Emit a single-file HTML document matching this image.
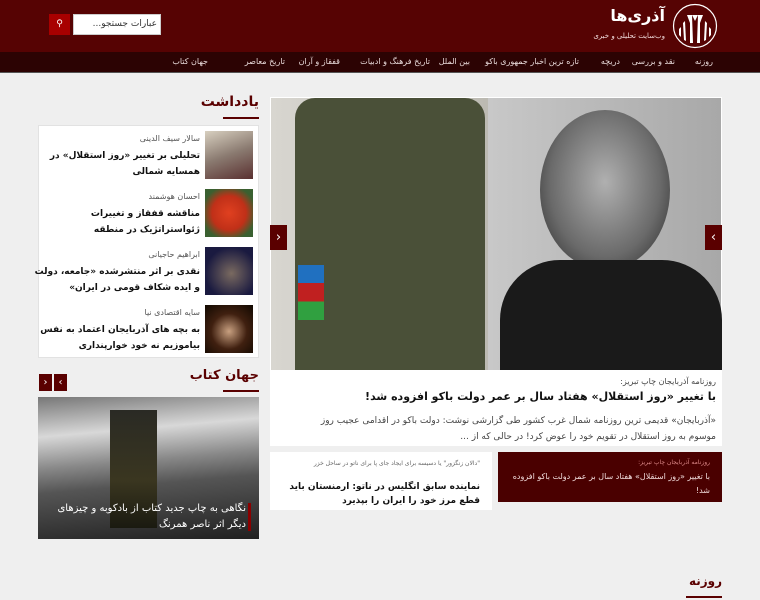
<!DOCTYPE html>
<html lang="fa" dir="rtl"><head><meta charset="utf-8">
<style>
*{margin:0;padding:0;box-sizing:border-box}
body{width:760px;height:600px;overflow:hidden;background:#efefef;font-family:"DejaVu Sans","Liberation Sans",sans-serif;color:#222;position:relative}
.abs{position:absolute}
#hdr{left:0;top:0;width:760px;height:52px;background:#560303}
#nav{left:0;top:52px;width:760px;height:21px;background:#2c0303;border-bottom:1px solid #555}
#nav span{position:absolute;top:5px;font-size:8px;color:#e8dada;white-space:nowrap}
.t{font-weight:bold}
</style></head><body>
<div id="hdr" class="abs">
 <svg class="abs" style="left:672px;top:3px" width="46" height="46" viewBox="0 0 46 46">
  <circle cx="23" cy="23" r="21.5" fill="none" stroke="#fff" stroke-width="1.2"/>
  <g fill="#fff">
   <path d="M15 12 L20 12 L21 40 L18 40 L18 20 Z"/><path d="M31 12 L26 12 L25 40 L28 40 L28 20 Z"/>
   <path d="M20 12 L26 12 L23 18 Z"/>
   <path d="M11 20 L13 18 L14 38 L12 37Z"/><path d="M35 20 L33 18 L32 38 L34 37Z"/>
   <path d="M7 26 L9 24 L9 34 L7 32Z"/><path d="M39 26 L37 24 L37 34 L39 32Z"/>
  </g>
 </svg>
 <div class="abs" style="right:95px;top:6px;font-size:16px;color:#fff;font-weight:bold">آذری‌ها</div>
 <div class="abs" style="right:95px;top:32px;font-size:7px;color:#f0dada">وب‌سایت تحلیلی و خبری</div>
 <div class="abs" style="left:73px;top:14px;width:88px;height:21px;background:#fff;border:1px solid #ccc;font-size:9px;color:#333;padding:4px 3px;text-align:right">عبارات جستجو...</div>
 <div class="abs" style="left:49px;top:14px;width:21px;height:21px;background:#a80000;color:#fff;font-size:9px;text-align:center;line-height:21px">&#9906;</div>
</div>
<div id="nav" class="abs">
 <span style="right:47px">روزنه</span><span style="right:85px">نقد و بررسی</span><span style="right:140px">دریچه</span>
 <span style="right:181px">تازه ترین اخبار جمهوری باکو</span><span style="right:290px">بین الملل</span>
 <span style="right:330px">تاریخ فرهنگ و ادبیات</span><span style="right:420px">قفقاز و آران</span>
 <span style="right:475px">تاریخ معاصر</span><span style="right:552px">جهان کتاب</span>
</div>

<!-- left column -->
<div class="abs t" style="right:501px;top:94px;font-size:14px;color:#5a0000">یادداشت</div>
<div class="abs" style="left:223px;top:117px;width:36px;height:2px;background:#5a0000"></div>
<div class="abs" style="left:38px;top:125px;width:221px;height:233px;background:#fff;border:1px solid #e2e2e2"></div>
<div class="abs" style="left:205px;top:131px;width:48px;height:48px;background:linear-gradient(160deg,#d8d0c0,#8a7a70 50%,#5a3030)"></div>
<div class="abs" style="left:205px;top:189px;width:48px;height:48px;background:radial-gradient(circle at 50% 50%,#e04020,#c03018 50%,#3a6030 80%)"></div>
<div class="abs" style="left:205px;top:247px;width:48px;height:48px;background:radial-gradient(circle at 55% 55%,#7a6a60,#1a1a40 70%)"></div>
<div class="abs" style="left:205px;top:305px;width:48px;height:48px;background:radial-gradient(circle at 50% 55%,#c8a080,#402010 50%,#100800)"></div>
<div class="abs" style="right:560px;top:134px;font-size:8px;color:#555">سالار سیف الدینی</div>
<div class="abs t" style="right:560px;top:148px;width:166px;font-size:9px;line-height:16px;color:#111">تحلیلی بر تغییر «روز استقلال» در همسایه شمالی</div>
<div class="abs" style="right:560px;top:192px;font-size:8px;color:#555">احسان هوشمند</div>
<div class="abs t" style="right:560px;top:206px;width:166px;font-size:9px;line-height:16px;color:#111">مناقشه قفقاز و تغییرات ژئواستراتژیک در منطقه</div>
<div class="abs" style="right:560px;top:250px;font-size:8px;color:#555">ابراهیم حاجیانی</div>
<div class="abs t" style="right:560px;top:264px;width:166px;font-size:9px;line-height:16px;color:#111">نقدی بر اثر منتشرشده «جامعه، دولت و ایده شکاف قومی در ایران»</div>
<div class="abs" style="right:560px;top:308px;font-size:8px;color:#555">سایه اقتصادی نیا</div>
<div class="abs t" style="right:560px;top:322px;width:166px;font-size:9px;line-height:16px;color:#111">به بچه های آذربایجان اعتماد به نفس بیاموزیم نه خود خوارپنداری</div>

<div class="abs t" style="right:501px;top:368px;font-size:13px;color:#5a0000">جهان کتاب</div>
<div class="abs" style="left:223px;top:390px;width:36px;height:2px;background:#5a0000"></div>
<div class="abs" style="left:39px;top:374px;width:13px;height:17px;background:#5a0000;color:#fff;font-size:10px;text-align:center;line-height:17px">‹</div>
<div class="abs" style="left:54px;top:374px;width:13px;height:17px;background:#5a0000;color:#fff;font-size:10px;text-align:center;line-height:17px">›</div>
<div class="abs" style="left:38px;top:397px;width:221px;height:142px;background:linear-gradient(175deg,#777 0%,#d8d8d8 25%,#888 45%,#555 60%,#202020 100%)"></div>
<div class="abs" style="left:110px;top:410px;width:47px;height:118px;background:linear-gradient(#2a2a24,#3a3620 60%,#1a1a10)"></div>
<div class="abs" style="left:248px;top:503px;width:3px;height:28px;background:#8a0000"></div>
<div class="abs" style="right:514px;top:501px;width:205px;font-size:10px;line-height:16px;color:#fff;text-align:right">نگاهی به چاپ جدید کتاب از بادکوبه و چیزهای دیگر اثر ناصر همرنگ</div>

<!-- main slider -->
<div class="abs" style="left:270px;top:97px;width:452px;height:273px;background:#fff"></div>
<div class="abs" style="left:271px;top:98px;width:217px;height:272px;background:linear-gradient(90deg,#d8d6d0,#bcbab2)"></div>
<div class="abs" style="left:295px;top:98px;width:190px;height:272px;background:#4a5038;border-radius:20px 20px 0 0"></div>
<div class="abs" style="left:298px;top:265px;width:26px;height:55px;background:linear-gradient(#2070c0 33%,#c02020 33% 66%,#30a040 66%)"></div>
<div class="abs" style="left:488px;top:98px;width:233px;height:272px;background:linear-gradient(90deg,#c8c8c8,#a8a8a8)"></div>
<div class="abs" style="left:540px;top:110px;width:130px;height:160px;background:radial-gradient(ellipse at 50% 45%,#b0b0b0,#6a6a6a 60%,#333 90%);border-radius:50%"></div>
<div class="abs" style="left:500px;top:260px;width:222px;height:110px;background:#1a1a1a;border-radius:60px 60px 0 0"></div>
<div class="abs" style="left:270px;top:225px;width:17px;height:25px;background:#5a0000;color:#fff;text-align:center;line-height:25px;font-size:13px">‹</div>
<div class="abs" style="left:705px;top:225px;width:17px;height:25px;background:#5a0000;color:#fff;text-align:center;line-height:25px;font-size:13px">›</div>
<div class="abs" style="left:270px;top:370px;width:452px;height:76px;background:#fff"></div>
<div class="abs" style="right:44px;top:377px;font-size:8px;color:#444">روزنامه آذربایجان چاپ تبریز:</div>
<div class="abs t" style="right:44px;top:390px;font-size:11px;color:#111">با تغییر «روز استقلال» هفتاد سال بر عمر دولت باکو افزوده شد!</div>
<div class="abs" style="right:44px;top:413px;width:425px;font-size:9px;line-height:16px;color:#444">«آذربایجان» قدیمی ترین روزنامه شمال غرب کشور طی گزارشی نوشت: دولت باکو در اقدامی عجیب روز موسوم به روز استقلال در تقویم خود را عوض کرد! در حالی که از ...</div>

<div class="abs" style="left:270px;top:452px;width:222px;height:58px;background:#fff"></div>
<div class="abs" style="right:280px;top:458px;width:195px;font-size:6px;line-height:11px;color:#666">"دالان زنگزور" یا دسیسه برای ایجاد جای پا برای ناتو در ساحل خزر</div>
<div class="abs t" style="right:280px;top:480px;width:205px;font-size:9px;line-height:14px;color:#111">نماینده سابق انگلیس در ناتو: ارمنستان باید قطع مرز خود را ایران را بپذیرد</div>
<div class="abs" style="left:498px;top:452px;width:224px;height:50px;background:#4a0000"></div>
<div class="abs" style="right:50px;top:459px;font-size:6px;color:#d88">روزنامه آذربایجان چاپ تبریز:</div>
<div class="abs" style="right:50px;top:470px;width:205px;font-size:8px;line-height:14px;color:#f0dada">با تغییر «روز استقلال» هفتاد سال بر عمر دولت باکو افزوده شد!</div>

<div class="abs t" style="right:38px;top:574px;font-size:12px;color:#5a0000">روزنه</div>
<div class="abs" style="left:686px;top:596px;width:36px;height:2px;background:#5a0000"></div>
</body></html>
